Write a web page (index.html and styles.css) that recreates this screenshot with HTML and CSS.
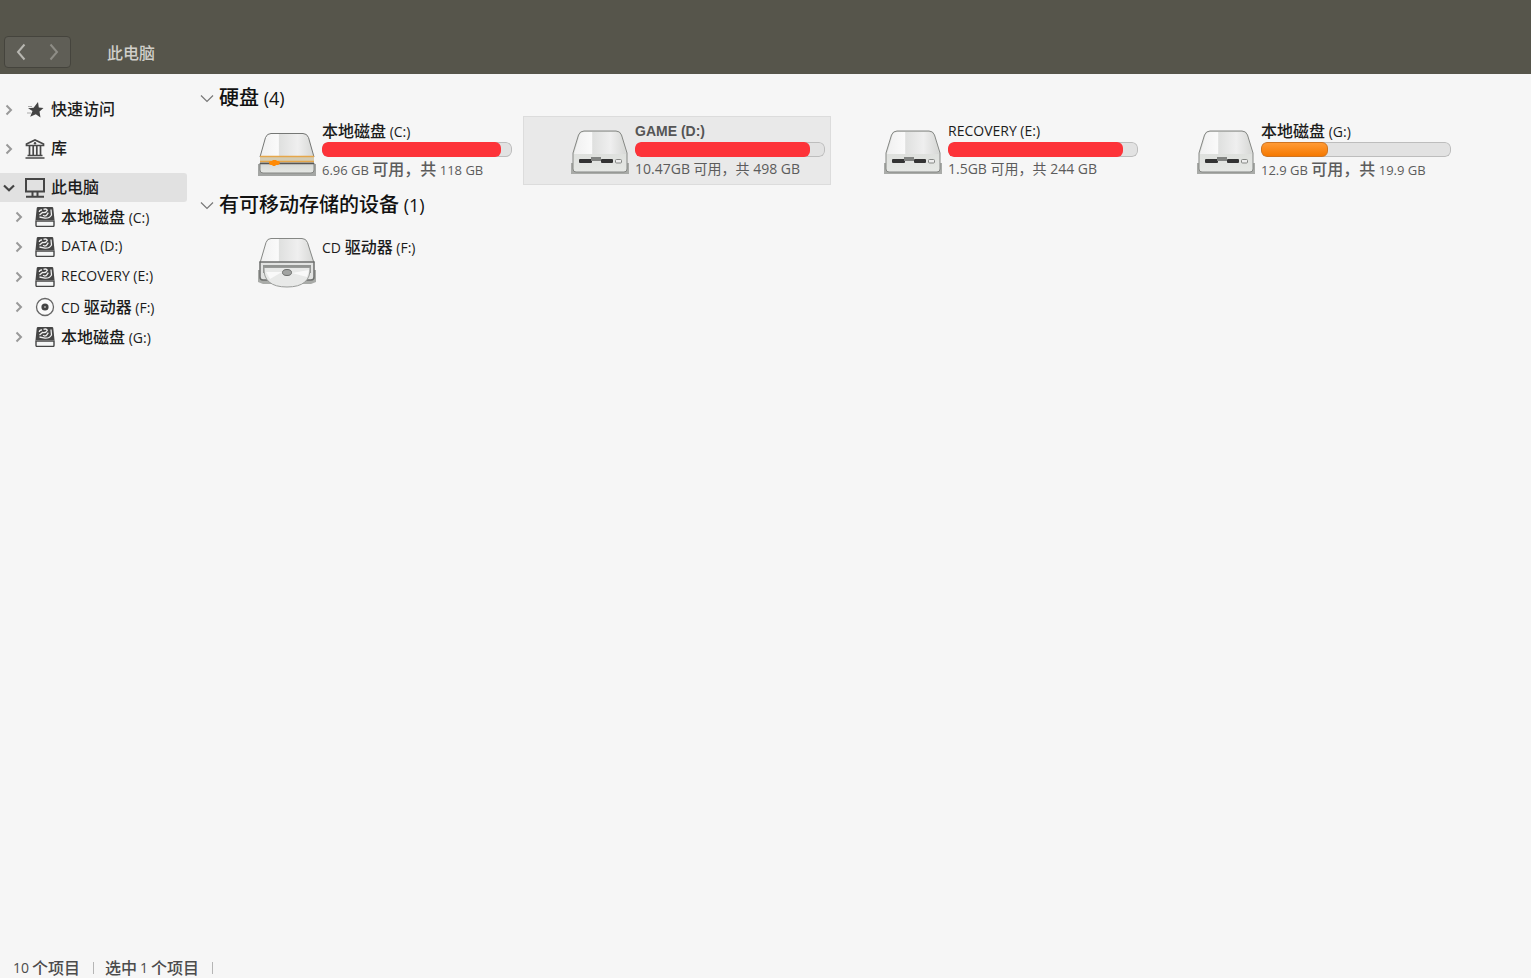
FILE: index.html
```html
<!DOCTYPE html>
<html lang="zh-CN">
<head>
    <meta charset="UTF-8">
    <meta name="viewport" content="width=device-width, initial-scale=1.0">
    <title>此电脑</title>
    <link rel="stylesheet" href="styles.css">
</head>
<body>
    <!-- Shared icons -->
    <svg class="defs" width="0" height="0" aria-hidden="true">
        <defs>
            <linearGradient id="top" x1="0" x2="1" y1="0" y2="0">
                <stop offset="0" stop-color="#f0f0f0"/>
                <stop offset="0.34" stop-color="#fafafa"/>
                <stop offset="0.36" stop-color="#dfe0df"/>
                <stop offset="0.7" stop-color="#efefef"/>
                <stop offset="1" stop-color="#d6d7d5"/>
            </linearGradient>
            <linearGradient id="front" x1="0" x2="0" y1="0" y2="1">
                <stop offset="0" stop-color="#d5d7d4"/>
                <stop offset="1" stop-color="#e6e8e5"/>
            </linearGradient>
            <symbol id="right" viewBox="0 0 8 12">
                <path d="M1.5 1.5 6 6l-4.500 4.500" fill="none" stroke="currentColor" stroke-width="2"/>
            </symbol>
            <symbol id="down" viewBox="0 0 12 8">
                <path d="M1 1.500 6 6.200l5-4.700" fill="none" stroke="currentColor" stroke-width="2.200"/>
            </symbol>
            <symbol id="thin-down" viewBox="0 0 14 9">
                <path d="M1 1.500 7 7.500l6-6" fill="none" stroke="currentColor" stroke-width="1.200"/>
            </symbol>
            <symbol id="disk" viewBox="0 0 20 20">
                <path d="M3 0h14q1.300 0 1.300 1.300L19.500 13H.5L1.700 1.300Q1.800 0 3 0z" fill="#454545"/>
                <path d="M1 14h18v4.200q0 1.300-1.300 1.300H2.300Q1 19.500 1 18.200z" fill="#f5f6f6" stroke="#454545" stroke-width="1.400"/>
                <path d="M4.300 5Q4.500 2.800 7 3M8.500 2.300q3-1 3.800 1Q11 6.300 7.500 5.500L4.500 8M16 2.500l.5 5.500q-2 3.500-6.500 3.200L4.500 10M8 8.300q2.500 1.700 4-.700l1.300-2" fill="none" stroke="#eee" stroke-width="1.300"/>
            </symbol>
            <symbol id="drive" viewBox="0 0 60 56">
                <path d="M1 42h58v11H1z" fill="#a9aba8"/>
                <path d="M14 10h32q4 0 5.500 4L57 32v16q0 3-3 3H6q-3 0-3-3V32L8.500 14Q10 10 14 10z" fill="url(#front)" stroke="#858784"/>
                <path d="M14 11h32q3.200 0 4.600 3.300L56 33H4L9.400 14.300Q10.800 11 14 11z" fill="url(#top)"/>
                <rect x="9" y="38" width="13" height="4" rx="1" fill="#333"/>
                <rect x="31" y="38" width="12" height="4" rx="1" fill="#333"/>
                <path d="M21 36h10v4H21z" fill="#828482"/>
                <rect x="45.500" y="38.500" width="6" height="3.500" rx="1" fill="#eee" stroke="#858784"/>
            </symbol>
            <symbol id="system-drive" viewBox="0 0 60 56">
                <path d="M1 43h58v12H1z" fill="#a4a6a4"/>
                <path d="M14 12.500h32q4 0 5.500 4L57 36H3l5.500-19.500q1.500-4 5.500-4z" fill="url(#top)" stroke="#757775"/>
                <path d="M3 42h54v7q0 3-3 3H6q-3 0-3-3z" fill="url(#front)" stroke="#858784"/>
                <path d="M3 35.500h54V41H3z" fill="#d4ccb5"/>
                <path d="M3 35.500h54M3 40.500h54" stroke="#e5a64a" stroke-width="1.500"/>
                <path d="M3 42.500h54" stroke="#555" stroke-width="1.500"/>
                <path d="M12 41.500q0-1.500 2-1.500h1l1-1h3l1 1h1q2 0 2 1.500T21 44h-2l-1 1h-2l-1-1h-1q-2 0-2-2.500z" fill="#ff8a05"/>
            </symbol>
            <symbol id="cd-drive" viewBox="0 0 60 56">
                <path d="M1 33h58v12l-5 2H6l-5-2z" fill="#a9aba8"/>
                <path d="M14 1.500h31q4 0 5.500 4L57 26H3L9 5.500q1.300-4 5-4z" fill="url(#top)" stroke="#858784"/>
                <path d="M3 25h54v15q0 3-3 3H6q-3 0-3-3z" fill="#e2e3e2" stroke="#6d6f6d" stroke-width="1.500"/>
                <path d="M6 28h48v8H6z" fill="#929492"/>
                <path d="M7 30.500h46Q54 50 30 50T7 30.500z" fill="#e8e9e8" stroke="#999b99"/>
                <path d="m9 35 16 0-12 7zM35 36l17-3-2 7z" fill="#f9f9f9"/>
                <ellipse cx="30" cy="35.500" rx="4.500" ry="3" fill="#a2a4a2" stroke="#6c6e6c"/>
            </symbol>
        </defs>
    </svg>

    <header class="toolbar">
        <div class="nav-buttons">
            <button class="back" aria-label="后退"><svg width="10" height="18" viewBox="0 0 10 18"><path d="M8.500 1.500 2 9l6.500 7.500" fill="none" stroke="currentColor" stroke-width="2"/></svg></button>
            <button class="forward" aria-label="前进"><svg width="10" height="18" viewBox="0 0 10 18"><path d="M1.500 1.500 8 9l-6.500 7.500" fill="none" stroke="currentColor" stroke-width="2"/></svg></button>
        </div>
        <h1>此电脑</h1>
    </header>

    <div class="content">
        <nav class="sidebar">
            <div class="row">
                <button class="toggle" aria-label="展开"><svg width="8" height="12"><use href="#right"/></svg></button>
                <a href="#"><svg width="20" height="20" viewBox="0 0 20 20"><path d="m13 2 .8 5.600 4.700.400-4 3.400 1 6-4.700-3.200-5.600 2.500L7.500 11 3 8.200l5.600-.500z" fill="#444"/><path d="M3 6.500h4M2 13h4" stroke="#aaa"/></svg><span class="label cjk">快速访问</span></a>
            </div>
            <div class="row">
                <button class="toggle" aria-label="展开"><svg width="8" height="12"><use href="#right"/></svg></button>
                <a href="#"><svg width="20" height="20" viewBox="0 0 20 20"><path d="M1.500 6.500V5L10 1l8.500 4v1.500zM4.500 7v9M8.200 7v9M11.800 7v9M15.500 7v9M2.500 16.500h15M.5 19h19" fill="none" stroke="#484848" stroke-width="1.700"/><circle cx="10" cy="4.300" r="1.200" fill="#484848"/></svg><span class="label cjk">库</span></a>
            </div>
            <div class="row selected">
                <button class="toggle open" aria-label="折叠"><svg width="12" height="8"><use href="#down"/></svg></button>
                <a href="#"><svg width="20" height="20" viewBox="0 0 20 20"><path d="M1 1h18v12.500H1zM7.500 14v4M12.500 14v4M1 18.800h18" fill="none" stroke="#454545" stroke-width="2"/></svg><span class="label cjk">此电脑</span></a>
            </div>
            <ul class="children">
                <li>
                    <button class="toggle" aria-label="展开"><svg width="8" height="12"><use href="#right"/></svg></button>
                    <a href="#"><svg width="20" height="20"><use href="#disk"/></svg><span class="label"><span class="cjk">本地磁盘</span> (C:)</span></a>
                </li>
                <li>
                    <button class="toggle" aria-label="展开"><svg width="8" height="12"><use href="#right"/></svg></button>
                    <a href="#"><svg width="20" height="20"><use href="#disk"/></svg><span class="label">DATA (D:)</span></a>
                </li>
                <li>
                    <button class="toggle" aria-label="展开"><svg width="8" height="12"><use href="#right"/></svg></button>
                    <a href="#"><svg width="20" height="20"><use href="#disk"/></svg><span class="label">RECOVERY (E:)</span></a>
                </li>
                <li>
                    <button class="toggle" aria-label="展开"><svg width="8" height="12"><use href="#right"/></svg></button>
                    <a href="#"><svg width="20" height="20" viewBox="0 0 20 20"><circle cx="10" cy="10" r="8.500" fill="#fafafa" stroke="#666" stroke-width="1.300"/><circle cx="10" cy="10" r="3.600" fill="#444"/><circle cx="10" cy="10" r="1" fill="#aaa"/></svg><span class="label">CD <span class="cjk">驱动器</span> (F:)</span></a>
                </li>
                <li>
                    <button class="toggle" aria-label="展开"><svg width="8" height="12"><use href="#right"/></svg></button>
                    <a href="#"><svg width="20" height="20"><use href="#disk"/></svg><span class="label"><span class="cjk">本地磁盘</span> (G:)</span></a>
                </li>
            </ul>
        </nav>

        <main>
            <section>
                <h2><button class="collapse" aria-label="折叠"><svg width="14" height="9"><use href="#thin-down"/></svg></button><span class="label"><span class="cjk">硬盘</span> (4)</span></h2>
                <div class="drives">
                    <div class="drive">
                        <svg class="icon" width="60" height="56"><use href="#system-drive"/></svg>
                        <div class="info">
                            <label class="name" for="usage-c"><span class="cjk">本地磁盘</span> (C:)</label>
                            <progress id="usage-c" value="94" max="100"></progress>
                            <p class="free">6.96 GB <span class="cjk">可用，共</span> 118 GB</p>
                        </div>
                    </div>
                    <div class="drive selected">
                        <svg class="icon" width="60" height="56"><use href="#drive"/></svg>
                        <div class="info">
                            <label class="name bold" for="usage-d">GAME (D:)</label>
                            <progress id="usage-d" value="92" max="100"></progress>
                            <p class="free light">10.47GB 可用，共 498 GB</p>
                        </div>
                    </div>
                    <div class="drive">
                        <svg class="icon" width="60" height="56"><use href="#drive"/></svg>
                        <div class="info">
                            <label class="name" for="usage-e">RECOVERY (E:)</label>
                            <progress id="usage-e" value="92" max="100"></progress>
                            <p class="free light">1.5GB 可用，共 244 GB</p>
                        </div>
                    </div>
                    <div class="drive">
                        <svg class="icon" width="60" height="56"><use href="#drive"/></svg>
                        <div class="info">
                            <label class="name" for="usage-g"><span class="cjk">本地磁盘</span> (G:)</label>
                            <progress class="normal" id="usage-g" value="35" max="100"></progress>
                            <p class="free">12.9 GB <span class="cjk">可用，共</span> 19.9 GB</p>
                        </div>
                    </div>
                </div>
            </section>

            <section>
                <h2><button class="collapse" aria-label="折叠"><svg width="14" height="9"><use href="#thin-down"/></svg></button><span class="label"><span class="cjk">有可移动存储的设备</span> (1)</span></h2>
                <div class="drives removable">
                    <div class="drive">
                        <svg class="icon" width="60" height="56"><use href="#cd-drive"/></svg>
                        <div class="info">
                            <div class="name">CD <span class="cjk">驱动器</span> (F:)</div>
                        </div>
                    </div>
                </div>
            </section>
        </main>
    </div>

    <footer class="statusbar">
        <p>10 <span class="cjk">个项目</span></p>
        <p><span class="cjk">选中</span> 1 <span class="cjk">个项目</span></p>
    </footer>
</body>
</html>
```

FILE: styles.css
```css
* {
    box-sizing: border-box;
}
body {
    margin: 0;
    min-height: 100vh;
    display: flex;
    flex-direction: column;
    background-color: #f6f6f6;
    color: #1c1c1c;
    font-family: "Open Sans", "Noto Sans CJK SC", sans-serif;
    font-size: 14px;
    font-weight: 500;
}
h1, h2, p, ul {
    margin: 0;
    padding: 0;
}
svg {
    display: block;
    flex-shrink: 0;
}
.defs {
    position: absolute;
}
button {
    display: flex;
    align-items: center;
    justify-content: center;
    padding: 0;
    border: none;
    background: none;
    cursor: pointer;
}
a {
    display: flex;
    align-items: center;
    gap: 6px;
    color: inherit;
    text-decoration: none;
}
.cjk {
    font-size: 16px;
}
.label {
    padding-bottom: 3px;
}

/* Toolbar */
.toolbar {
    display: flex;
    align-items: flex-end;
    gap: 36px;
    height: 74px;
    padding: 0 4px 6px;
    background-color: #56554b;
}
.toolbar h1 {
    color: #d0cfca;
    font-size: 16px;
    font-weight: 500;
    line-height: 30px;
}
.nav-buttons {
    display: flex;
    width: 67px;
    height: 32px;
    border: 1px solid #45443d;
    border-radius: 4px;
    background-color: #5f5e56;
}
.nav-buttons button {
    flex: 1;
}
.back {
    color: #b8b7b1;
}
.forward {
    color: #8e8d86;
}

/* Sidebar */
.content {
    display: flex;
    flex: 1;
}
.sidebar {
    width: 187px;
    flex-shrink: 0;
    padding-top: 21px;
}
.row {
    display: flex;
    align-items: center;
    height: 29px;
    margin-bottom: 10px;
    padding-left: 3px;
}
.row a {
    margin-left: 10px;
}
.row.selected {
    margin-bottom: 0;
    border-radius: 0 3px 3px 0;
    background-color: #e1e1e1;
}
.toggle {
    width: 12px;
    height: 20px;
    color: #999;
}
.toggle.open {
    color: #444;
}
.children {
    list-style: none;
}
.children li {
    display: flex;
    align-items: center;
    height: 30px;
    padding-left: 13px;
}
.children a {
    margin-left: 10px;
}

/* Drives */
main {
    flex: 1;
    padding: 8px 0 0 13px;
}
h2 {
    display: flex;
    align-items: center;
    gap: 5px;
    height: 32px;
    margin-bottom: 2px;
    color: #111;
    font-size: 18px;
    font-weight: 500;
}
h2 .cjk {
    font-size: 20px;
}
.collapse {
    color: #777;
}
.drives {
    display: grid;
    grid-template-columns: repeat(auto-fill, 308px);
    gap: 5px;
    margin-bottom: 4px;
    padding-left: 10px;
}
.removable {
    margin-top: 11px;
}
.drive {
    display: flex;
    gap: 5px;
    height: 69px;
    padding: 4px 5px 0 46px;
    border: 1px solid transparent;
}
.drive.selected {
    border-color: #dcdcdc;
    background-color: #e9e9e9;
}
.info {
    flex: 1;
}
.name {
    display: block;
    height: 20px;
    line-height: 20px;
}
.name.bold {
    color: #555;
    font-family: "Liberation Sans", Arial, sans-serif;
    font-weight: bold;
}
progress {
    display: block;
    width: 190px;
    height: 15px;
    margin: 1px 0 2px;
    border: none;
    border-radius: 6px;
    appearance: none;
    overflow: hidden;
}
progress::-webkit-progress-bar {
    border-radius: 6px;
    background-color: #e2e2e2;
    box-shadow: inset 0 0 0 1px #bdbdbd;
}
progress::-webkit-progress-value {
    border-radius: 6px;
    background-color: #fd3339;
}
progress.normal::-webkit-progress-value {
    border: 1px solid #cf7420;
    background: linear-gradient(#ff9a35, #f57900);
}
.free {
    height: 20px;
    color: #5c5c5c;
    font-size: 13px;
    line-height: 20px;
}
.free.light {
    font-size: 14px;
    font-weight: 400;
}

/* Status bar */
.statusbar {
    display: flex;
    height: 20px;
    padding-left: 13px;
    color: #4c4c4c;
    line-height: 20px;
}
.statusbar p {
    display: flex;
    align-items: center;
    gap: 3px;
    margin-right: 11px;
}
.statusbar p::after {
    content: "";
    width: 1px;
    height: 12px;
    margin-left: 10px;
    background-color: #b5b5b5;
}
```
